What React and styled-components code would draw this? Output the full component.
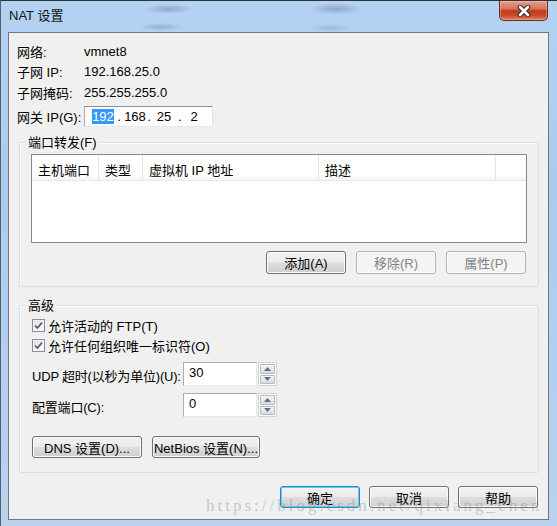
import React from "react";
import styled, { createGlobalStyle } from "styled-components";

const columns = [
  { title: "主机端口", width: 67 },
  { title: "类型", width: 44 },
  { title: "虚拟机 IP 地址", width: 176 },
  { title: "描述", width: 177 },
  { title: "", width: null },
];

const App = () => {
  return (
    <>
      <GlobalStyle />
      <Window>
        <TitleBar>
          <Title>NAT 设置</Title>
          <CloseButton aria-label="关闭">
            <svg width="16" height="12" viewBox="0 0 16 12">
              <path d="M4 2 L12 10 M12 2 L4 10" stroke="#3b2a26" strokeWidth="4.6" strokeLinecap="round" />
              <path d="M4 2 L12 10 M12 2 L4 10" stroke="#ffffff" strokeWidth="2.6" strokeLinecap="round" />
            </svg>
          </CloseButton>
        </TitleBar>

        <Body>
          <InfoRow>
            <InfoLabel>网络:</InfoLabel>
            <span>vmnet8</span>
          </InfoRow>
          <InfoRow $h={21}>
            <InfoLabel>子网 IP:</InfoLabel>
            <span>192.168.25.0</span>
          </InfoRow>
          <InfoRow>
            <InfoLabel>子网掩码:</InfoLabel>
            <span>255.255.255.0</span>
          </InfoRow>
          <InfoRow $h={21} $mt={4}>
            <InfoLabel>网关 IP(G):</InfoLabel>
            <IpBox>
              <IpPart $w={22}><Selected>192</Selected></IpPart>
              <IpPart $w={10}>.</IpPart>
              <IpPart $w={22}>168</IpPart>
              <IpPart $w={6}>.</IpPart>
              <IpPart $w={24}>25</IpPart>
              <IpPart $w={8}>.</IpPart>
              <IpPart $w={20}>2</IpPart>
            </IpBox>
          </InfoRow>

          <Group $mt={15} $pt={11} $pb={12} $px={11}>
            <Legend>端口转发(F)</Legend>
            <Table>
              <HeaderRow>
                {columns.map((c, i) => (
                  <HeaderCell key={i} $w={c.width}>{c.title}</HeaderCell>
                ))}
              </HeaderRow>
            </Table>
            <ButtonRow $mt={8} $gap={10} $end>
              <Button $w={80} $h={23}>添加(A)</Button>
              <Button $w={80} $h={23} disabled>移除(R)</Button>
              <Button $w={80} $h={23} disabled>属性(P)</Button>
            </ButtonRow>
          </Group>

          <Group $mt={18} $pt={9} $pb={14} $px={12}>
            <Legend>高级</Legend>
            <CheckRow>
              <CheckBox>
                <svg width="9" height="9" viewBox="0 0 9 9">
                  <path d="M1 4.6 L3.4 7 L8 1.6" fill="none" stroke="#4b5d8f" strokeWidth="1.7" />
                </svg>
              </CheckBox>
              允许活动的 FTP(T)
            </CheckRow>
            <CheckRow>
              <CheckBox>
                <svg width="9" height="9" viewBox="0 0 9 9">
                  <path d="M1 4.6 L3.4 7 L8 1.6" fill="none" stroke="#4b5d8f" strokeWidth="1.7" />
                </svg>
              </CheckBox>
              允许任何组织唯一标识符(O)
            </CheckRow>

            <FieldRow $mt={7}>
              <FieldLabel>UDP 超时(以秒为单位)(U):</FieldLabel>
              <SpinBox value="30" />
            </FieldRow>
            <FieldRow $mt={7}>
              <FieldLabel>配置端口(C):</FieldLabel>
              <SpinBox value="0" />
            </FieldRow>

            <ButtonRow $mt={19} $gap={10}>
              <Button $w={110} $h={22}>DNS 设置(D)...</Button>
              <Button $w={108} $h={22}>NetBios 设置(N)...</Button>
            </ButtonRow>
          </Group>

          <Footer>
            <Button $w={80} $h={22} $focus>确定</Button>
            <Button $w={80} $h={22}>取消</Button>
            <Button $w={80} $h={22}>帮助</Button>
          </Footer>
        </Body>

        <Watermark>https://blog.csdn.net/qixiang_chen</Watermark>
      </Window>
    </>
  );
};

const SpinBox = ({ value }) => (
  <SpinWrap>
    <SpinInput>{value}</SpinInput>
    <Spinner>
      <SpinButton>
        <svg width="7" height="4" viewBox="0 0 7 4"><path d="M0 4 L3.5 0 L7 4 Z" fill="#5b6f9c" /></svg>
      </SpinButton>
      <SpinButton>
        <svg width="7" height="4" viewBox="0 0 7 4"><path d="M0 0 L3.5 4 L7 0 Z" fill="#5b6f9c" /></svg>
      </SpinButton>
    </Spinner>
  </SpinWrap>
);

export default App;

// Styled Components
const GlobalStyle = createGlobalStyle`
  html, body {
    margin: 0;
    padding: 0;
    background: #ffffff;
  }
  body {
    font-family: "Liberation Sans", "Noto Sans CJK SC", sans-serif;
    font-size: 13px;
    color: #000;
  }
  * { box-sizing: border-box; }
`;

const Window = styled.div`
  position: relative;
  width: 557px;
  height: 526px;
  display: flex;
  flex-direction: column;
  overflow: hidden;
  border-top: 1px solid #2f343b;
  border-left: 1px solid #56606c;
  background: linear-gradient(180deg, #b4d3f3 0%, #abcbee 35%, #b9d3ee 100%);
`;

const TitleBar = styled.div`
  height: 31px;
  display: flex;
  align-items: flex-start;
  background:
    radial-gradient(ellipse 26px 5px at 168px 8px, rgba(70, 90, 120, 0.35), transparent),
    radial-gradient(ellipse 22px 4px at 160px 26px, rgba(70, 90, 120, 0.3), transparent),
    radial-gradient(ellipse 28px 6px at 335px 8px, rgba(70, 90, 120, 0.35), transparent),
    radial-gradient(ellipse 24px 4px at 330px 27px, rgba(70, 90, 120, 0.22), transparent);
`;

const Title = styled.div`
  padding-left: 8px;
  line-height: 30px;
  font-size: 13px;
  color: #111;
`;

const CloseButton = styled.div`
  margin-left: auto;
  margin-right: 9px;
  width: 49px;
  height: 20px;
  display: flex;
  align-items: center;
  justify-content: center;
  border: 1px solid #6a2a1d;
  border-top: none;
  border-radius: 0 0 5px 5px;
  background: linear-gradient(180deg, #e6a08d 0%, #d8735c 40%, #c13b1f 52%, #c9472a 75%, #de8261 100%);
  box-shadow: inset 0 0 0 1px rgba(255, 220, 200, 0.35);
`;

const Body = styled.div`
  flex: 1;
  display: flex;
  flex-direction: column;
  margin: 0 8px 6px 7px;
  padding-top: 8px;
  border: 1px solid #6c7886;
  background: #f0f0f0;
`;

const InfoRow = styled.div`
  display: flex;
  align-items: center;
  height: ${(p) => p.$h || 20}px;
  margin-top: ${(p) => p.$mt || 0}px;
  padding-left: 8px;
`;

const InfoLabel = styled.span`
  width: 67px;
  flex: none;
`;

const IpBox = styled.div`
  width: 129px;
  height: 21px;
  display: flex;
  align-items: center;
  padding-left: 7px;
  background: #fff;
  border: 1px solid #abadb3;
  border-top-color: #8d9096;
  border-right-color: #dfe3e8;
  border-bottom-color: #e3e9ef;
`;

const IpPart = styled.span`
  width: ${(p) => p.$w}px;
  flex: none;
  text-align: center;
  line-height: 15px;
`;

const Selected = styled.span`
  display: inline-block;
  background: #3399ff;
  color: #fff;
  line-height: 15px;
`;

const Group = styled.div`
  position: relative;
  margin: ${(p) => p.$mt}px 9px 0 10px;
  padding: ${(p) => p.$pt}px ${(p) => p.$px}px ${(p) => p.$pb}px;
  border: 1px solid #d5dfe5;
  border-radius: 3px;
  box-shadow: inset 1px 1px 0 #fff;
`;

const Legend = styled.div`
  position: absolute;
  top: -8px;
  left: 6px;
  padding: 0 2px;
  line-height: 15px;
  background: #f0f0f0;
`;

const Table = styled.div`
  height: 89px;
  background: #fff;
  border: 1px solid #828790;
`;

const HeaderRow = styled.div`
  display: flex;
  height: 26px;
  border-bottom: 1px solid #e6e9ee;
  background: linear-gradient(180deg, #ffffff 0%, #ffffff 80%, #f3f4f6 100%);
`;

const HeaderCell = styled.div`
  ${(p) => (p.$w ? `width: ${p.$w}px; flex: none;` : "flex: 1;")}
  display: flex;
  align-items: center;
  padding: 3px 0 0 6px;
  border-right: ${(p) => (p.$w ? "1px solid #e3e6ea" : "none")};
  white-space: nowrap;
`;

const ButtonRow = styled.div`
  display: flex;
  justify-content: ${(p) => (p.$end ? "flex-end" : "flex-start")};
  gap: ${(p) => p.$gap}px;
  margin-top: ${(p) => p.$mt}px;
  padding-right: ${(p) => (p.$end ? 1 : 0)}px;
`;

const Button = styled.button`
  width: ${(p) => p.$w}px;
  height: ${(p) => p.$h}px;
  padding: 0;
  font-family: inherit;
  font-size: 13px;
  color: #000;
  border: 1px solid ${(p) => (p.$focus ? "#3c7fb1" : "#707070")};
  border-radius: 3px;
  background: linear-gradient(180deg, #f2f2f2 0%, #ebebeb 48%, #dddddd 52%, #cfcfcf 100%);
  box-shadow: ${(p) => (p.$focus ? "inset 0 0 0 1px #48d7fb" : "inset 0 0 0 1px #fcfcfc")};
  white-space: nowrap;

  &:disabled {
    color: #838383;
    border-color: #adb2b5;
    background: #f4f4f4;
    box-shadow: inset 0 0 0 1px #fcfcfc;
  }
`;

const CheckRow = styled.div`
  display: flex;
  align-items: center;
  gap: 3px;
  height: 20px;
`;

const CheckBox = styled.span`
  width: 13px;
  height: 13px;
  flex: none;
  display: flex;
  align-items: center;
  justify-content: center;
  border: 1px solid #8e8f8f;
  background: linear-gradient(135deg, #dadada 0%, #f4f4f4 60%, #ffffff 100%);
  box-shadow: inset 0 0 0 1px #f2f2f2;
`;

const FieldRow = styled.div`
  display: flex;
  align-items: center;
  margin-top: ${(p) => p.$mt}px;
`;

const FieldLabel = styled.span`
  width: 151px;
  flex: none;
  padding-top: 2px;
  white-space: nowrap;
  letter-spacing: -0.2px;
`;

const SpinWrap = styled.div`
  display: flex;
  height: 24px;
  gap: 1px;
`;

const SpinInput = styled.div`
  width: 74px;
  height: 24px;
  padding: 2px 0 0 5px;
  line-height: 15px;
  background: #fff;
  border: 1px solid #abadb3;
  border-right-color: #e3e9ef;
  border-bottom-color: #e3e9ef;
`;

const Spinner = styled.div`
  width: 19px;
  display: flex;
  flex-direction: column;
  gap: 1px;
  padding: 1px;
  border: 1px solid #d2d2d2;
  background: #fff;
`;

const SpinButton = styled.div`
  flex: 1;
  display: flex;
  align-items: center;
  justify-content: center;
  border: 1px solid #b9b9b9;
  border-radius: 1px;
  background: linear-gradient(180deg, #f6f6f6 0%, #e8e8e8 50%, #dcdcdc 100%);
`;

const Footer = styled.div`
  display: flex;
  justify-content: flex-end;
  gap: 9px;
  margin-top: 13px;
  padding-right: 10px;
`;

const Watermark = styled.div`
  position: absolute;
  left: 205px;
  top: 495px;
  font-family: "Liberation Serif", serif;
  font-size: 17px;
  line-height: 20px;
  letter-spacing: 3px;
  color: rgba(140, 140, 140, 0.42);
  white-space: nowrap;
  pointer-events: none;
`;
